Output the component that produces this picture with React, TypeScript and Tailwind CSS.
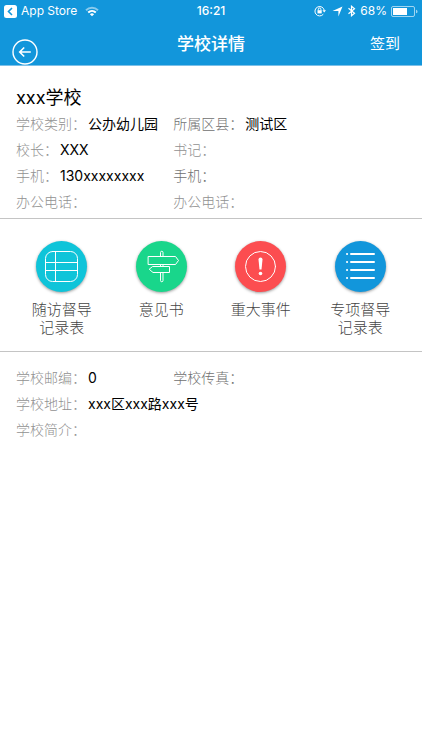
import type { ReactNode } from "react";

type Item = { label: string; value?: string; tone?: "light" | "dark" };

function Field({ label, value, tone = "light" }: Item) {
  return (
    <div className="flex gap-0.5 whitespace-nowrap">
      <dt className={tone === "light" ? "font-light text-[#919191]" : "font-light text-[#6f6f6f]"}>{label}：</dt>
      <dd className="text-black">{value}</dd>
    </div>
  );
}

function Fields({ items }: { items: Item[] }) {
  return (
    <dl className="grid grid-cols-[2fr_3fr] gap-x-0.5 text-sm leading-[26px]">
      {items.map((item, i) => (
        <Field key={i} {...item} />
      ))}
    </dl>
  );
}

function Action({ color, lines, children }: { color: string; lines: string[]; children: ReactNode }) {
  return (
    <button type="button" className="flex flex-1 flex-col items-center gap-[9px] text-[#444444]">
      <span className={`flex size-[51px] items-center justify-center rounded-full shadow-[0_1px_3px_rgba(0,0,0,0.4)] ${color}`}>
        <svg width="35" height="35" viewBox="0 0 35 35" fill="none" stroke="currentColor" strokeLinecap="round" strokeLinejoin="round" className="text-white" aria-hidden="true">
          {children}
        </svg>
      </span>
      <span className="flex flex-col text-[15px] font-light leading-[18px]">
        {lines.map((line) => (
          <span key={line}>{line}</span>
        ))}
      </span>
    </button>
  );
}

function StatusBar() {
  return (
    <div className="grid h-[22px] grid-cols-[1fr_auto_1fr] items-center px-1 text-xs">
      <div className="flex items-center gap-1">
        <svg width="13" height="13" viewBox="0 0 13 13" aria-hidden="true">
          <rect width="13" height="13" rx="2.5" fill="white" />
          <path d="M8 3 4.5 6.5 8 10" fill="none" stroke="#1296db" strokeWidth="1.6" />
        </svg>
        <span>App Store</span>
        <svg width="14" height="11" viewBox="0 0 14 11" fill="none" stroke="white" strokeWidth="1.9" className="ml-1" aria-hidden="true">
          <path d="M1 4.2a8.7 8.7 0 0 1 12 0" opacity="0.5" />
          <path d="M3.2 6.5a5.5 5.5 0 0 1 7.6 0" />
          <path d="M7 10.3 4.9 8.2a3 3 0 0 1 4.2 0z" fill="white" stroke="none" />
        </svg>
      </div>
      <span className="font-medium">16:21</span>
      <div className="flex items-center justify-end gap-1">
        <svg width="12" height="12" viewBox="0 0 12 12" fill="none" stroke="white" strokeWidth="1" aria-hidden="true">
          <path d="M9.3 9.2A4.7 4.7 0 1 1 10.3 5.5" />
          <path d="M8.4 5.3h3.6l-1.8 2.3z" fill="white" stroke="none" />
          <rect x="3.5" y="5.2" width="4.2" height="3.2" fill="white" stroke="none" />
          <path d="M4.3 5.4V4.3a1.3 1.3 0 0 1 2.6 0v1.1" />
        </svg>
        <svg width="11" height="11" viewBox="0 0 11 11" className="ml-0.5" aria-hidden="true">
          <path d="M10.5 .5 6.4 10.5V5H.5z" fill="white" />
        </svg>
        <svg width="9" height="12" viewBox="0 0 9 12" fill="none" stroke="white" strokeWidth="1.2" aria-hidden="true">
          <path d="m1.5 3.3 6 5-3 2.5V1.2l3 2.5-6 5" />
        </svg>
        <span>68%</span>
        <svg width="27" height="11" viewBox="0 0 27 11" aria-hidden="true">
          <rect x="0.5" y="0.5" width="23" height="10" rx="1.5" fill="none" stroke="white" opacity="0.6" />
          <rect x="2" y="2" width="14" height="7" fill="white" />
          <path d="M25 3.7c2 .4 2 3.2 0 3.6z" fill="white" opacity="0.6" />
        </svg>
      </div>
    </div>
  );
}

export default function App() {
  return (
    <div className="min-h-screen bg-white font-['Inter','Noto_Sans_CJK_SC',sans-serif]">
      <header className="border-b border-[#7cc0e8] bg-[#1296db] text-white">
        <StatusBar />
        <nav className="grid h-[43px] grid-cols-[1fr_auto_1fr] items-center px-3">
          <button type="button" aria-label="返回" className="self-end justify-self-start">
            <svg width="26" height="26" viewBox="0 0 26 26" fill="none" stroke="white" strokeWidth="1.4" aria-hidden="true">
              <circle cx="13" cy="13" r="12" />
              <path d="M18.8 13H8M12.2 8.5 7.7 13l4.5 4.5" strokeWidth="1.6" />
            </svg>
          </button>
          <h1 className="text-[17px] font-medium leading-6">学校详情</h1>
          <button type="button" className="justify-self-end px-2.5 text-[15px] leading-6">签到</button>
        </nav>
      </header>
      <main>
        <section className="border-b border-[#c4c4c4] px-4 pb-[3px] pt-[18px]">
          <h2 className="text-lg leading-[27px]">xxx学校</h2>
          <Fields
            items={[
              { label: "学校类别", value: "公办幼儿园" },
              { label: "所属区县", value: "测试区", tone: "dark" },
              { label: "校长", value: "XXX" },
              { label: "书记" },
              { label: "手机", value: "130xxxxxxxx" },
              { label: "手机", tone: "dark" },
              { label: "办公电话" },
              { label: "办公电话" },
            ]}
          />
        </section>
        <section className="flex items-start border-b border-[#c4c4c4] px-3 pb-3.5 pt-[22px]">
          <Action color="bg-[#0fc4d9]" lines={["随访督导", "记录表"]}>
            <rect x="1.5" y="2.5" width="32" height="30" rx="7" />
            <path d="M1.5 13.5h32M1.5 21.5h32M11.5 2.5v30" />
          </Action>
          <Action color="bg-[#19d68b]" lines={["意见书"]}>
            <path d="M16.5 7.5v-4a1.25 1.25 0 0 1 2.5 0v4M16.5 15.5v2M19 15.5v2M16.5 23.5v8a1.25 1.25 0 0 0 2.5 0v-8" />
            <path d="M4.5 7.5h27l3 4-3 4h-27zM9 17.5h16.5v6H9l-3.5-3z" />
          </Action>
          <Action color="bg-[#fc4d50]" lines={["重大事件"]}>
            <circle cx="17.5" cy="17.5" r="15" />
            <path d="M15.5 10.5a2 2 0 0 1 4 0l-1 10h-2z" fill="currentColor" stroke="none" />
            <circle cx="17.5" cy="24.5" r="1.8" fill="currentColor" stroke="none" />
          </Action>
          <Action color="bg-[#1296db]" lines={["专项督导", "记录表"]}>
            <path d="M8 5h23M8 13h23M8 21h23M8 29h23M4 5h.1M4 13h.1M4 21h.1M4 29h.1" strokeWidth="2" />
          </Action>
        </section>
        <section className="px-4 pt-[13px]">
          <Fields
            items={[
              { label: "学校邮编", value: "0" },
              { label: "学校传真", tone: "dark" },
            ]}
          />
          <dl className="text-sm leading-[26px]">
            <Field label="学校地址" value="xxx区xxx路xxx号" />
            <Field label="学校简介" />
          </dl>
        </section>
      </main>
    </div>
  );
}
